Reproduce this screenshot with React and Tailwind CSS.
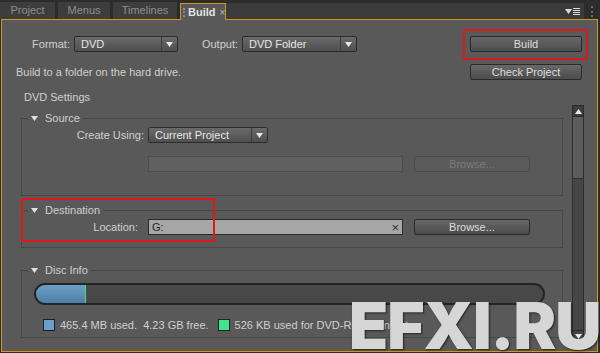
import React from "react";

const FONT = "font-['Liberation_Sans',Arial,sans-serif]";

function Down({ color = "#e8e8e8" }) {
  return (
    <svg width="7" height="5" viewBox="0 0 7 5">
      <path d="M0 0h7L3.5 5z" fill={color} />
    </svg>
  );
}

function Up({ color = "#e8e8e8" }) {
  return (
    <svg width="7" height="5" viewBox="0 0 7 5">
      <path d="M0 5h7L3.5 0z" fill={color} />
    </svg>
  );
}

function Select({ value, w }) {
  return (
    <div
      className={`flex h-[16px] items-stretch rounded-[2px] border border-[#2c2c2c] bg-gradient-to-b from-[#6a6a6a] to-[#4f4f4f] ${w}`}
    >
      <span className="flex-1 truncate pl-[6px] leading-[14px] text-[#e6e6e6]">{value}</span>
      <span className="flex w-[16px] items-center justify-center border-l border-[#3c3c3c]">
        <Down />
      </span>
    </div>
  );
}

function Button({ children, w, h = "h-[16px]", disabled }) {
  return disabled ? (
    <div
      className={`flex ${h} ${w} items-center justify-center rounded-[2px] border border-[#4c4c4c] bg-[#5a5a5a] text-[#7b7b7b]`}
    >
      {children}
    </div>
  ) : (
    <div
      className={`flex ${h} ${w} items-center justify-center rounded-[2px] border border-[#2a2a2a] bg-gradient-to-b from-[#686868] to-[#4c4c4c] text-[#dedede]`}
    >
      {children}
    </div>
  );
}

function Legend({ children }) {
  return (
    <legend className="ml-[6px] flex h-[13px] items-center px-[3px] leading-[13px] text-[#cfcfcf]">
      <Down color="#e0e0e0" />
      <span className="ml-[7px]">{children}</span>
    </legend>
  );
}

const TABS = [
  { label: "Project", w: "w-[56px]" },
  { label: "Menus", w: "w-[53px]" },
  { label: "Timelines", w: "w-[65px]" },
];

export default function App() {
  return (
    <div className={`relative h-[353px] w-[600px] overflow-hidden bg-[#2c2c2c] text-[11px] ${FONT}`}>
      {/* tab strip */}
      <div className="flex h-[20px] items-end">
        <div className="flex h-[17px] items-start gap-[2px] self-start pt-[2px]">
          {TABS.map((t) => (
            <div
              key={t.label}
              className={`flex h-[17px] ${t.w} items-center justify-center border-r border-[#2a2a2a] bg-[#3d3d3d] text-[#8d8d8d]`}
            >
              {t.label}
            </div>
          ))}
        </div>
        <div className="relative z-10 ml-[2px] flex h-[17px] w-[46px] items-center border-x border-t border-[#d4961e] bg-[#595959] text-[#e2e2e2]">
          <span className="ml-[2px] h-[9px] w-[2px] border-l-2 border-dotted border-[#8a8a8a]" />
          <span className="ml-[3px] font-bold">Build</span>
          <span className="ml-[4px] text-[10px] text-[#b5b5b5]">×</span>
        </div>
        <div className="mb-[1px] flex h-[16px] w-[358px] items-center justify-end bg-[#3b3b3b] pr-[4px]">
          <Down color="#dcdcdc" />
          <div className="ml-[1px] flex flex-col gap-[1px]">
            <span className="h-[1px] w-[7px] bg-[#dcdcdc]" />
            <span className="h-[1px] w-[7px] bg-[#dcdcdc]" />
            <span className="h-[1px] w-[7px] bg-[#dcdcdc]" />
            <span className="h-[1px] w-[7px] bg-[#dcdcdc]" />
          </div>
        </div>
        <div className="mb-[3px] ml-[7px] h-[11px] w-[3px] border-l-2 border-dotted border-[#6a6a6a]" />
      </div>

      {/* panel */}
      <div className="-mt-[1px] ml-[1px] flex h-[333px] w-[597px] flex-col border border-[#d4961e] bg-[#595959] text-[#d0d0d0]">
        <div className="mt-[16px] flex h-[16px] items-center pl-[26px]">
          <span className="w-[42px] text-right">Format:</span>
          <div className="ml-[4px]">
            <Select value="DVD" w="w-[104px]" />
          </div>
          <span className="ml-[18px] w-[42px] text-right">Output:</span>
          <div className="ml-[4px]">
            <Select value="DVD Folder" w="w-[115px]" />
          </div>
          <div className="ml-auto mr-[15px]">
            <Button w="w-[112px]">Build</Button>
          </div>
        </div>

        <div className="mt-[12px] flex h-[16px] items-center pl-[14px]">
          <span>Build to a folder on the hard drive.</span>
          <div className="ml-auto mr-[15px]">
            <Button w="w-[112px]">Check Project</Button>
          </div>
        </div>

        <div className="mt-[11px] h-[12px] pl-[22px] leading-[12px]">DVD Settings</div>

        <div className="mt-[2px] flex min-h-0 flex-1 overflow-hidden">
          <div className="w-[570px]">
            {/* Source */}
            <fieldset className="ml-[19px] mt-[7px] w-[542px] border border-[#474747] pb-[23px]">
              <Legend>Source</Legend>
              <div className="mt-[2px] flex h-[16px] items-center pl-[38px]">
                <span className="w-[84px] text-right">Create Using:</span>
                <div className="ml-[4px]">
                  <Select value="Current Project" w="w-[120px]" />
                </div>
              </div>
              <div className="mt-[13px] flex h-[16px] items-center pl-[126px]">
                <div className="h-[16px] w-[255px] border border-[#4d4d4d] bg-[#5f5f5f]" />
                <div className="ml-[11px]">
                  <Button w="w-[116px]" disabled>
                    Browse...
                  </Button>
                </div>
              </div>
            </fieldset>

            {/* Destination */}
            <fieldset className="ml-[19px] mt-[8px] w-[542px] border border-[#474747] pb-[12px]">
              <Legend>Destination</Legend>
              <div className="mt-[2px] flex h-[16px] items-center pl-[38px]">
                <span className="w-[78px] text-right">Location:</span>
                <div className="ml-[10px] flex h-[16px] w-[255px] items-center justify-between border border-[#2a2a2a] bg-[#a7a7a7] px-[3px] text-[#1e1e1e]">
                  <span>G:</span>
                  <span className="text-[13px] leading-none text-[#333]">×</span>
                </div>
                <div className="ml-[11px]">
                  <Button w="w-[116px]">Browse...</Button>
                </div>
              </div>
            </fieldset>

            {/* Disc Info */}
            <fieldset className="ml-[19px] mt-[16px] w-[542px] border border-[#474747] pb-[6px]">
              <Legend>Disc Info</Legend>
              <div className="ml-[12px] mt-[6px] flex h-[22px] w-[511px] overflow-hidden rounded-full border-2 border-[#242424] bg-[#484848]">
                <div className="h-full w-[50px] border-r border-[#3fe07f] bg-gradient-to-b from-[#6c9fc8] to-[#4e7fa6]" />
              </div>
              <div className="ml-[21px] mt-[14px] flex h-[12px] items-center">
                <span className="h-[12px] w-[12px] border border-[#1f1f1f] bg-[#6a9fcb]" />
                <span className="ml-[5px]">465.4 MB used.&nbsp; 4.23 GB free.</span>
                <span className="ml-[9px] h-[12px] w-[12px] border border-[#1f1f1f] bg-[#3fe58c]" />
                <span className="ml-[5px]">526 KB used for DVD-ROM content</span>
              </div>
            </fieldset>
          </div>

          {/* scrollbar */}
          <div className="flex h-[237px] w-[12px] flex-col">
            <div className="flex h-[12px] items-center justify-center border border-[#2a2a2a] bg-[#3c3c3c]">
              <Up />
            </div>
            <div className="h-[62px] border-x border-b border-[#2e2e2e] bg-[#5c5c5c]" />
            <div className="flex-1 border-x border-[#2e2e2e] bg-[#464646]" />
            <div className="flex h-[12px] items-center justify-center border border-[#2a2a2a] bg-[#444]">
              <Down />
            </div>
          </div>
        </div>
      </div>

      {/* annotation boxes */}
      <div className="absolute left-[463px] top-[29px] h-[31px] w-[125px] border-2 border-[#dc1a1a]" />
      <div className="absolute left-[21px] top-[198px] h-[44px] w-[194px] border-2 border-[#dc1a1a]" />

      {/* watermark */}
      <div className="absolute left-[349px] top-[294px] font-['Inter',sans-serif] text-[64px] font-black leading-none tracking-[-1px] text-[#d6d6d6] [text-shadow:1px_1px_2px_rgba(0,0,0,0.6)]">
        EFXI.RU
      </div>
    </div>
  );
}
